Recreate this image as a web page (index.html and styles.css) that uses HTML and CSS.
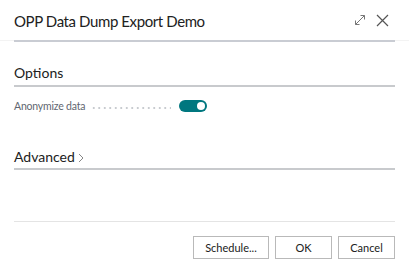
FILE: index.html
```html
<!DOCTYPE html>
<html>
  <head>
    <title>OPP Data Dump Export Demo</title>
    <meta name="viewport" content="width=device-width, initial-scale=1">
    <link rel="stylesheet" href="styles.css">
  </head>
  <body>
  <div class="dialog">
    <div class="header">
      <h1>OPP Data Dump Export Demo</h1>
      <div class="tools">
        <svg class="icon" width="12" height="12" viewBox="0 0 12 12">
          <path d="M1.5 10.5 L10.5 1.5 M6.5 1.5 H10.5 V5.5 M1.5 6.5 V10.5 H5.5" fill="none" stroke="#777" stroke-width="1"/>
        </svg>
        <svg class="icon" width="13" height="13" viewBox="0 0 13 13">
          <path d="M1 1 L12 12 M12 1 L1 12" fill="none" stroke="#555" stroke-width="1.2"/>
        </svg>
      </div>
    </div>
    <div class="body">
      <div class="group">
        <h2>Options</h2>
        <div class="field">
          <span class="label">Anonymize data</span>
          <span class="leader"></span>
          <span class="toggle"><span class="knob"></span></span>
        </div>
      </div>
      <div class="group collapsed">
        <h2>Advanced<svg class="chev" width="6" height="10" viewBox="0 0 6 10"><path d="M1 1 L5 5 L1 9" fill="none" stroke="#888" stroke-width="1"/></svg></h2>
      </div>
    </div>
    <div class="footer">
      <button class="btn wide">Schedule...</button>
      <button class="btn">OK</button>
      <button class="btn">Cancel</button>
    </div>
  </div>
  </body>
</html>
```

FILE: styles.css
```css
* {
  font-family: Lato, "Open Sans", sans-serif;
  padding: 0px;
  margin: 0px;
  box-sizing: border-box;
}
html {
  background-color: white;
}
.dialog {
  width: 409px;
  height: 273px;
  display: flex;
  flex-direction: column;
}
.header {
  display: flex;
  align-items: center;
  justify-content: space-between;
  height: 41px;
  padding: 0px 20px 0px 14px;
  border-bottom: 1px solid #f3f3f3;
  position: relative;
}
.header::after {
  content: "";
  position: absolute;
  left: 14px;
  right: 14px;
  bottom: -2px;
  height: 2px;
  background-color: #c9ccd3;
}
.header h1 {
  font-size: 15px;
  font-weight: normal;
  color: #212121;
  letter-spacing: -0.4px;
  padding-top: 2px;
}
.tools {
  display: flex;
  align-items: center;
  gap: 10px;
}
.body {
  flex: 1;
  padding: 19px 14px 0px 14px;
}
.group h2 {
  font-size: 14px;
  font-weight: normal;
  color: #212121;
  border-bottom: 2px solid #c8cacd;
  height: 27px;
  line-height: 26px;
  display: flex;
  align-items: center;
}
.chev {
  margin-left: 3px;
  margin-top: 1px;
}
.collapsed {
  margin-top: 27px;
}
.collapsed h2 {
  padding-top: 3px;
}
.field {
  display: flex;
  align-items: center;
  height: 20px;
  margin-top: 9px;
  width: 193px;
}
.label {
  font-size: 10.5px;
  letter-spacing: -0.2px;
  color: #5f6670;
}
.leader {
  flex: 1;
  height: 2px;
  margin: 3px 8px 0px 6px;
  background-image: radial-gradient(circle, #b4b8be 0.6px, transparent 0.9px);
  background-size: 5.5px 2px;
}
.toggle {
  width: 28px;
  height: 12px;
  border-radius: 6px;
  background-color: #00777f;
  display: flex;
  align-items: center;
  justify-content: flex-end;
  padding-right: 2px;
}
.knob {
  width: 8px;
  height: 8px;
  border-radius: 50%;
  background-color: white;
}
.footer {
  margin: 0px 14px;
  border-top: 1px solid #e4e4e4;
  height: 52px;
  display: flex;
  justify-content: flex-end;
  align-items: flex-start;
  gap: 6px;
  padding-top: 14px;
}
.btn {
  height: 23px;
  width: 57px;
  background-color: white;
  border: 1px solid #b9b9b9;
  font-size: 11px;
  color: #212121;
}
.wide {
  width: 76px;
}
```
